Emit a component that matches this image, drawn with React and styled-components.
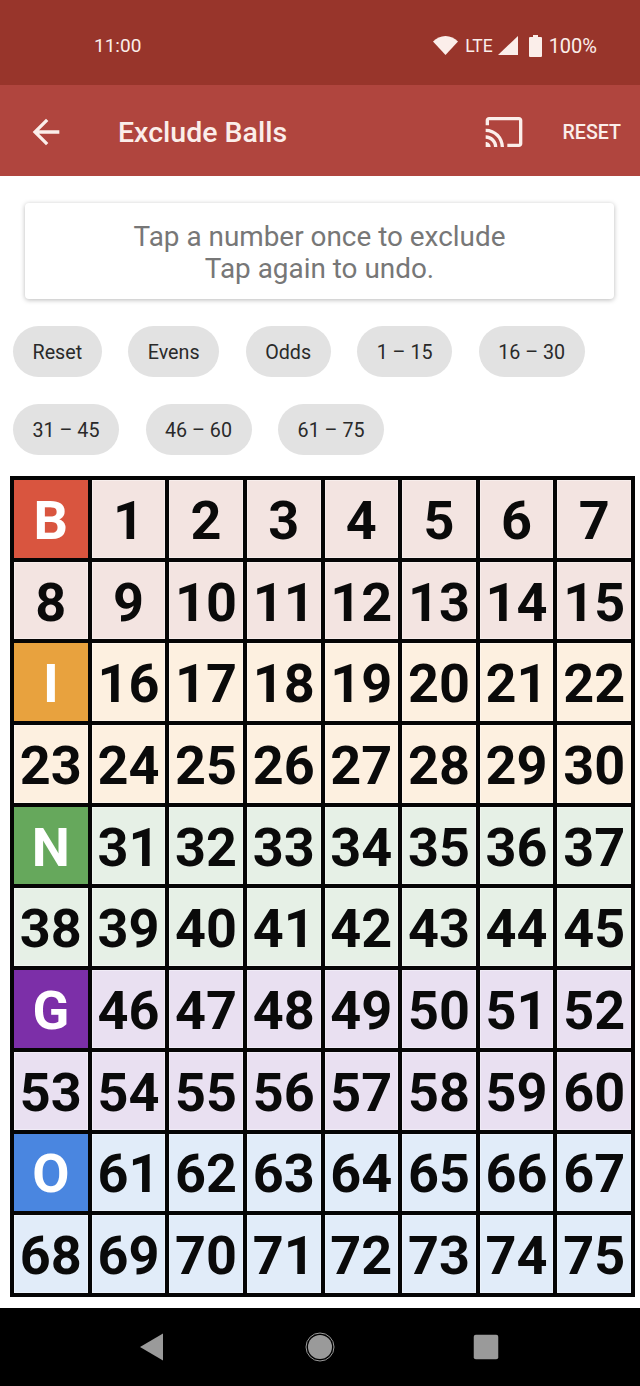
import React from "react";
import styled, { createGlobalStyle } from "styled-components";

const GlobalStyle = createGlobalStyle`
  html, body {
    margin: 0;
    padding: 0;
    background: #fff;
    font-family: Roboto, "Liberation Sans", sans-serif;
  }
`;

const Page = styled.div`
  display: flex;
  flex-direction: column;
  width: 640px;
  height: 1386px;
  overflow: hidden;
`;

const StatusBar = styled.div`
  display: flex;
  align-items: center;
  justify-content: space-between;
  height: 85px;
  padding: 6px 43px 0 94px;
  box-sizing: border-box;
  background: #98352b;
  color: #fbeeea;
  font-size: 19px;
`;

const StatusIcons = styled.div`
  display: flex;
  align-items: center;
`;

const Lte = styled.span`
  font-size: 17.5px;
  margin: 0 5px 0 7px;
`;

const Percent = styled.span`
  font-size: 20px;
  margin-left: 7px;
`;

const AppBar = styled.div`
  display: flex;
  align-items: center;
  height: 91px;
  padding: 3px 19px 0 26px;
  box-sizing: border-box;
  background: #b0453e;
  color: #fbeeea;
`;

const Title = styled.div`
  flex: 1;
  margin-left: 52px;
  font-size: 28.5px;
  font-weight: 500;
`;

const CastIcon = styled.svg`
  width: 40px;
  height: 40px;
  margin-right: 39px;
`;

const ResetAction = styled.div`
  font-size: 19.6px;
  font-weight: 500;
`;

const Content = styled.div`
  flex: 1;
  display: flex;
  flex-direction: column;
  padding: 27px 5px 0 10px;
`;

const Hint = styled.div`
  margin: 0 21px 27px 15px;
  height: 96px;
  padding-top: 4px;
  box-sizing: border-box;
  display: flex;
  flex-direction: column;
  align-items: center;
  justify-content: center;
  border-radius: 4px;
  box-shadow: 0 1px 5px rgba(0, 0, 0, 0.28);
  color: #777;
  font-size: 27.9px;
  line-height: 32px;
`;

const Chips = styled.div`
  display: flex;
  flex-wrap: wrap;
  column-gap: 26.6px;
  row-gap: 27px;
  margin: 0 0 21px 3px;
`;

const Chip = styled.div`
  display: flex;
  align-items: center;
  height: 51px;
  padding: 1px 19.5px 0;
  box-sizing: border-box;
  border-radius: 26px;
  background: #e2e2e2;
  color: #2a2a2a;
  font-size: 19.7px;
`;

const Board = styled.div`
  display: grid;
  grid-template-columns: repeat(8, 1fr);
  grid-template-rows: repeat(10, 1fr);
  gap: 4px;
  width: 625px;
  height: 821px;
  padding: 4px;
  box-sizing: border-box;
  background: #050505;
`;

const Cell = styled.div`
  display: flex;
  align-items: center;
  justify-content: center;
  padding-top: 3px;
  box-sizing: border-box;
  background: ${(props) => props.$bg};
  box-shadow: ${(props) => (props.$letter ? "none" : "inset 0 0 0 1px rgba(255, 255, 255, 0.35)")};
  color: ${(props) => (props.$letter ? "#fff" : "#0a0a0a")};
  font-size: 54px;
  font-weight: 700;
  overflow: hidden;
`;

const NavBar = styled.div`
  display: flex;
  align-items: center;
  justify-content: center;
  gap: 130px;
  height: 78px;
  background: #000;
`;

const NavIcon = styled.svg`
  width: 36px;
  height: 36px;
`;

const groups = [
  { letter: "B", head: "#d9553f", tint: "#f3e4e1" },
  { letter: "I", head: "#e8a23e", tint: "#fdf0e0" },
  { letter: "N", head: "#66a85c", tint: "#e6f0e6" },
  { letter: "G", head: "#7c2fa8", tint: "#e9e0f1" },
  { letter: "O", head: "#4a86e0", tint: "#e1ecf9" },
];

const chips = ["Reset", "Evens", "Odds", "1 – 15", "16 – 30", "31 – 45", "46 – 60", "61 – 75"];

const App = () => {
  return (
    <>
      <GlobalStyle />
      <Page>
        <StatusBar>
          <span>11:00</span>
          <StatusIcons>
            <svg width="25" height="19" viewBox="0 0 25 19">
              <path d="M12.500 19 0 5.500C3.400 2.200 7.700 0 12.500 0S21.600 2.200 25 5.500z" fill="#fbeeea" />
            </svg>
            <Lte>LTE</Lte>
            <svg width="20" height="19" viewBox="0 0 20 19">
              <path d="M20 0v19H0z" fill="#fbeeea" />
            </svg>
            <svg width="13" height="22" viewBox="0 0 13 22" style={{ marginLeft: 11 }}>
              <path d="M4 0h5v2h3a1 1 0 0 1 1 1v18a1 1 0 0 1-1 1H1a1 1 0 0 1-1-1V3a1 1 0 0 1 1-1h3z" fill="#fbeeea" />
            </svg>
            <Percent>100%</Percent>
          </StatusIcons>
        </StatusBar>
        <AppBar>
          <svg width="40" height="40" viewBox="0 0 24 24" fill="#fbeeea">
            <path d="M20 11H7.830l5.590-5.590L12 4l-8 8 8 8 1.410-1.410L7.830 13H20v-2z" />
          </svg>
          <Title>Exclude Balls</Title>
          <CastIcon viewBox="0 0 24 24" fill="#fbeeea">
            <path d="M21 3H3c-1.100 0-2 .9-2 2v3h2V5h18v14h-7v2h7c1.100 0 2-.9 2-2V5c0-1.100-.9-2-2-2zM1 18v3h3c0-1.660-1.340-3-3-3zm0-4v2c2.760 0 5 2.240 5 5h2c0-3.870-3.130-7-7-7zm0-4v2c4.970 0 9 4.030 9 9h2c0-6.070-4.930-11-11-11z" />
          </CastIcon>
          <ResetAction>RESET</ResetAction>
        </AppBar>
        <Content>
          <Hint>
            <span>Tap a number once to exclude</span>
            <span>Tap again to undo.</span>
          </Hint>
          <Chips>
            {chips.map((chip) => (
              <Chip key={chip}>{chip}</Chip>
            ))}
          </Chips>
          <Board>
            {groups.map((group, g) => [
              <Cell key={group.letter} $letter $bg={group.head}>
                {group.letter}
              </Cell>,
              ...Array.from({ length: 15 }, (_, i) => {
                const n = g * 15 + i + 1;
                return (
                  <Cell key={n} $bg={group.tint}>
                    {n}
                  </Cell>
                );
              }),
            ])}
          </Board>
        </Content>
        <NavBar>
          <NavIcon viewBox="0 0 36 36">
            <path d="M27 4.500v27L4 18z" fill="#9a9a9a" />
          </NavIcon>
          <NavIcon viewBox="0 0 36 36">
            <circle cx="18" cy="18" r="12" fill="#9a9a9a" />
            <circle cx="18" cy="18" r="14" fill="none" stroke="#9a9a9a" strokeWidth="1" />
          </NavIcon>
          <NavIcon viewBox="0 0 36 36">
            <rect x="5.750" y="5.750" width="24.500" height="24.500" rx="2" fill="#9a9a9a" />
          </NavIcon>
        </NavBar>
      </Page>
    </>
  );
};

export default App;
